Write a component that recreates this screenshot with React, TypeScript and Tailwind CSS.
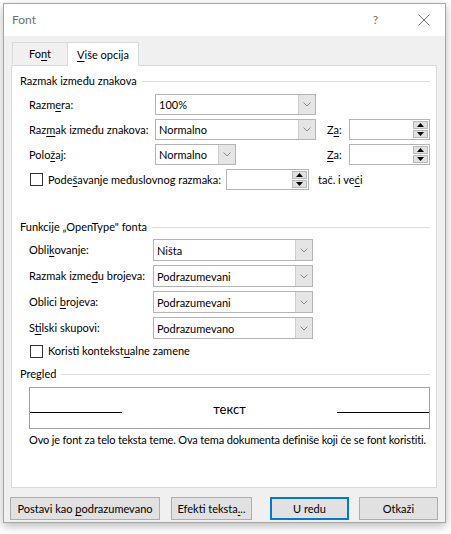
import type { ReactNode } from 'react';

const font = { fontFamily: 'Lato, "Noto Sans", sans-serif' };

function U({ children }: { children: ReactNode }) {
  return <span className="underline underline-offset-2">{children}</span>;
}

function Chevron() {
  return (
    <svg width="8" height="5" viewBox="0 0 8 5" className="block">
      <path d="M0.5 0.5 L4 4 L7.5 0.5" fill="none" stroke="#8a8a8a" strokeWidth="1" />
    </svg>
  );
}

function Combo({ value, w, h = 21 }: { value: string; w: string; h?: number }) {
  return (
    <div
      className={`flex ${w} shrink-0 items-stretch border border-[#b4b4b4] bg-white`}
      style={{ height: h }}
    >
      <div className="flex flex-1 items-center pl-[3px] leading-none">{value}</div>
      <div className="flex w-[17px] items-center justify-center border-l border-[#cdcdcd] bg-[#e5e5e5]">
        <Chevron />
      </div>
    </div>
  );
}

function Spin({ w }: { w: string }) {
  return (
    <div className={`flex h-[21px] ${w} shrink-0 items-stretch border border-[#b4b4b4] bg-white`}>
      <div className="flex-1" />
      <div className="flex w-[16px] flex-col gap-px py-px pr-px">
        <div className="flex flex-1 items-center justify-center border border-[#b9b9b9] bg-[#e1e1e1]">
          <svg width="7" height="4" viewBox="0 0 7 4" className="block">
            <path d="M0 4 L3.5 0 L7 4 Z" fill="#000" />
          </svg>
        </div>
        <div className="flex flex-1 items-center justify-center border border-[#b9b9b9] bg-[#e1e1e1]">
          <svg width="7" height="4" viewBox="0 0 7 4" className="block">
            <path d="M0 0 L3.5 4 L7 0 Z" fill="#000" />
          </svg>
        </div>
      </div>
    </div>
  );
}

function Header({ children }: { children: ReactNode }) {
  return (
    <div className="flex h-[16px] items-center pl-[8px] pr-[6px]">
      <span className="whitespace-nowrap">{children}</span>
      <div className="ml-[5px] h-px flex-1 bg-[#dcdcdc]" />
    </div>
  );
}

function Check() {
  return <div className="h-[13px] w-[13px] shrink-0 border border-[#333] bg-white" />;
}

function Button({ children, w, primary }: { children: ReactNode; w: string; primary?: boolean }) {
  return (
    <div
      className={`flex h-[23px] ${w} items-center justify-center whitespace-nowrap ${
        primary
          ? 'border border-[#0078d7] bg-[#e1e1e1] shadow-[inset_0_0_0_1px_#0078d7]'
          : 'border border-[#adadad] bg-[#e1e1e1]'
      }`}
    >
      <span>{children}</span>
    </div>
  );
}

export default function App() {
  return (
    <div className="h-[534px] w-[451px] bg-white pl-[3px] pt-[3px] text-[11px] leading-[16px] text-black" style={font}>
      <div className="flex h-[520px] w-[443px] flex-col border border-[#a6a6a6] shadow-[0_3px_9px_rgba(0,0,0,0.28)]">
        {/* Title bar */}
        <div className="flex h-[32px] shrink-0 items-center bg-white pl-[8px] text-[#707070]">
          <span className="text-[12px]">Font</span>
          <span className="ml-auto mr-[40px] text-[12px]">?</span>
          <svg width="12" height="12" viewBox="0 0 12 12" className="mr-[15px]">
            <path d="M0.5 0.5 L11.5 11.5 M11.5 0.5 L0.5 11.5" stroke="#707070" strokeWidth="1" />
          </svg>
        </div>

        {/* Body */}
        <div className="flex flex-1 flex-col bg-[#f0f0f0] pl-[7px] pt-[6px]">
          {/* Tabs */}
          <div className="relative z-10 flex h-[23px] items-end pl-px">
            <div className="mb-px flex h-[22px] w-[55px] items-center justify-center border-l border-t border-[#d9d9d9] bg-[#f0f0f0]">
              <span>
                Fo<U>n</U>t
              </span>
            </div>
            <div className="-mb-px flex h-[24px] w-[72px] items-center justify-center whitespace-nowrap border-l border-r border-t border-[#d9d9d9] bg-white">
              <span>
                <U>V</U>iše opcija
              </span>
            </div>
          </div>

          {/* Panel */}
          <div className="flex h-[423px] w-[426px] flex-col border border-[#d9d9d9] bg-white pt-[7px]">
            <Header>Razmak između znakova</Header>

            <div className="mt-[5px] flex items-center whitespace-nowrap pl-[17px]">
              <div className="w-[126px] shrink-0">
                Razm<U>e</U>ra:
              </div>
              <Combo value="100%" w="w-[161px]" />
            </div>

            <div className="mt-[4px] flex items-center whitespace-nowrap pl-[17px]">
              <div className="w-[126px] shrink-0">
                Raz<U>m</U>ak između znakova:
              </div>
              <Combo value="Normalno" w="w-[161px]" />
              <div className="ml-[11px] w-[22px] shrink-0">
                Z<U>a</U>:
              </div>
              <Spin w="w-[81px]" />
            </div>

            <div className="mt-[4px] flex items-center whitespace-nowrap pl-[17px]">
              <div className="w-[126px] shrink-0">
                Polo<U>ž</U>aj:
              </div>
              <Combo value="Normalno" w="w-[81px]" />
              <div className="ml-[91px] w-[22px] shrink-0">
                <U>Z</U>a:
              </div>
              <Spin w="w-[81px]" />
            </div>

            <div className="mt-[4px] grid grid-cols-[13px_183px_83px_auto] items-center whitespace-nowrap pl-[18px]">
              <Check />
              <div className="pl-[5px]">
                Pode<U>š</U>avanje međuslovnog razmaka:
              </div>
              <Spin w="w-[83px]" />
              <div className="pl-[9px]">
                tač. i ve<U>ć</U>i
              </div>
            </div>

            <div className="mt-[29px]">
              <Header>Funkcije „OpenType" fonta</Header>
            </div>

            <div className="mt-[4px] flex items-center whitespace-nowrap pl-[17px]">
              <div className="w-[124px] shrink-0">
                Obli<U>k</U>ovanje:
              </div>
              <Combo value="Ništa" w="w-[160px]" h={22} />
            </div>
            <div className="mt-[4px] flex items-center whitespace-nowrap pl-[17px]">
              <div className="w-[124px] shrink-0">
                Razmak izme<U>đ</U>u brojeva:
              </div>
              <Combo value="Podrazumevani" w="w-[160px]" h={22} />
            </div>
            <div className="mt-[4px] flex items-center whitespace-nowrap pl-[17px]">
              <div className="w-[124px] shrink-0">
                Oblici <U>b</U>rojeva:
              </div>
              <Combo value="Podrazumevani" w="w-[160px]" h={22} />
            </div>
            <div className="mt-[4px] flex items-center whitespace-nowrap pl-[17px]">
              <div className="w-[124px] shrink-0">
                S<U>t</U>ilski skupovi:
              </div>
              <Combo value="Podrazumevano" w="w-[160px]" h={22} />
            </div>

            <div className="mt-[4px] flex h-[16px] items-center gap-[5px] whitespace-nowrap pl-[18px]">
              <Check />
              <span>
                Koristi kontekst<U>u</U>alne zamene
              </span>
            </div>

            <div className="mt-[7px]">
              <Header>Pregled</Header>
            </div>

            <div className="ml-[17px] mt-[5px] flex h-[42px] w-[401px] items-start border border-[#a0a0a0]">
              <div className="h-[25px] w-[92px] border-b border-black" />
              <div className="flex-1 pt-[12px] text-center text-[13px] leading-[18px]">текст</div>
              <div className="h-[25px] w-[92px] border-b border-black" />
            </div>

            <div className="ml-[17px] mt-[3px] whitespace-nowrap tracking-[-0.15px]">
              Ovo je font za telo teksta teme. Ova tema dokumenta definiše koji će se font koristiti.
            </div>
          </div>

          {/* Buttons */}
          <div className="mt-[9px] flex">
            <div className="-ml-px">
              <Button w="w-[150px]">
                Postavi kao <U>p</U>odrazumevano
              </Button>
            </div>
            <div className="ml-[11px]">
              <Button w="w-[81px]">
                Efekti teksta<U>.</U>..
              </Button>
            </div>
            <div className="ml-[18px]">
              <Button w="w-[79px]" primary>
                U redu
              </Button>
            </div>
            <div className="ml-[10px]">
              <Button w="w-[79px]">Otkaži</Button>
            </div>
          </div>
        </div>
      </div>
    </div>
  );
}
